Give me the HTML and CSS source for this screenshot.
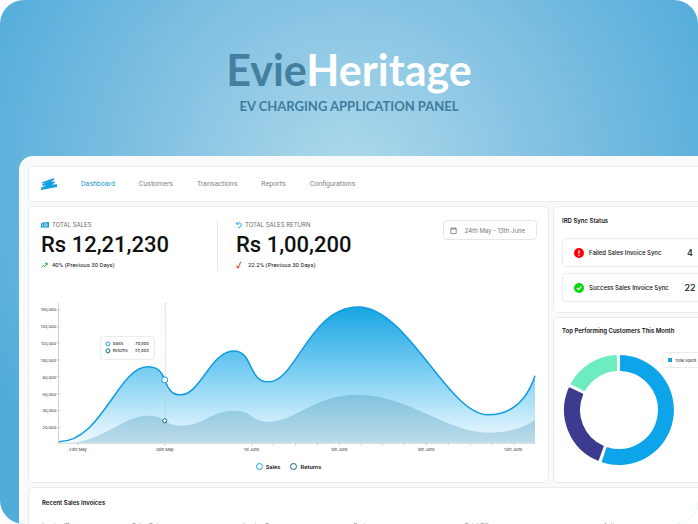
FILE: index.html
```html
<!DOCTYPE html>
<html lang="en">
<head>
    <meta charset="UTF-8">
    <meta name="viewport" content="width=device-width, initial-scale=1.0">
    <title>EvieHeritage</title>
    <link rel="stylesheet" href="styles.css">
</head>
<body>
    <div class="stage">
        <header class="hero">
            <h1><span>Evie</span>Heritage</h1>
            <p>EV CHARGING APPLICATION PANEL</p>
        </header>

        <div class="panel">
            <nav class="navbar card">
                <svg class="logo" viewBox="0 0 16 12" role="img" aria-label="Evie">
                    <path d="M1 4.200 12.500.2 13.500 1.500 10 3.800 14.200 3.400 13.600 5 10.800 6.500 16 6.300V9L0 12V9.800L5 7.600 1 7.800 1.400 6.200 5 4.400 1 5.400z" fill="#12a0e2"/>
                </svg>
                <ul class="menu">
                    <li><a href="#" class="active">Dashboard</a></li>
                    <li><a href="#">Customers</a></li>
                    <li><a href="#">Transactions</a></li>
                    <li><a href="#">Reports</a></li>
                    <li><a href="#">Configurations</a></li>
                </ul>
            </nav>

            <main class="layout">
                <section class="card sales">
                    <div class="stats">
                        <div class="stat">
                            <h2>
                                <svg viewBox="0 0 8 6" width="8" height="6"><path d="M0 1h1v5H0zM1.500 .5 8 0v5.500H1.500z" fill="#1599dc"/><circle cx="4.800" cy="2.900" r="1.300" fill="none" stroke="#fff" stroke-width=".8"/></svg>
                                TOTAL SALES
                            </h2>
                            <p class="value">Rs 12,21,230</p>
                            <p class="trend">
                                <svg viewBox="0 0 7 6" width="7" height="6"><path d="M.5 5 2.500 3.600l1.200.9L6 1.500M4 1.200h2.200v2" fill="none" stroke="#16a637"/></svg>
                                40% (Previous 30 Days)
                            </p>
                        </div>
                        <div class="stat stat-return">
                            <h2>
                                <svg viewBox="0 0 6 6" width="6" height="6"><path d="M1.200 1.500A2.300 2.300 0 1 1 2 5.200M.6.300v1.900h1.900" fill="none" stroke="#1599dc" stroke-width=".9"/></svg>
                                TOTAL SALES RETURN
                            </h2>
                            <p class="value">Rs 1,00,200</p>
                            <p class="trend trend-down">
                                <svg viewBox="0 0 6 8" width="6" height="8"><path d="M5 .8 3.500 3.200l.6 1L1.500 6.500M1 4.500v2.200h2.200" fill="none" stroke="#d8371f"/></svg>
                                22.2% (Previous 30 Days)
                            </p>
                        </div>
                        <button class="date-range" type="button">
                            <svg viewBox="0 0 7 7" width="7" height="7"><path d="M.8 1.300h5.400v5.200H.8zM.8 2h5.400M2 .2v1.300M5 .2v1.300" fill="none" stroke="#777" stroke-width=".8"/></svg>
                            24th May - 13th June
                        </button>
                    </div>

                    <svg class="chart" viewBox="0 0 498 155">
                        <defs>
                            <linearGradient id="salesFill" x1="0" y1="0" x2="0" y2="1">
                                <stop offset="0" stop-color="#17a5e2"/>
                                <stop offset=".5" stop-color="#80d0f3"/>
                                <stop offset="1" stop-color="#f0faff"/>
                            </linearGradient>
                            <linearGradient id="returnsFill" x1="0" y1="0" x2="0" y2="1">
                                <stop offset="0" stop-color="#82c3df"/>
                                <stop offset="1" stop-color="#bbdbe9"/>
                            </linearGradient>
                        </defs>

                        <!-- axes -->
                        <path class="axis" d="M18.500 3v140.500H496M16 10h4M16 27h4M16 43h4M16 60h4M16 77h4M16 94h4M16 111h4M16 128h4"/>
                        <path class="axis" d="M38 143v3M125 143v3M212 143v3M234 143v3M256 143v3M278 143v3M300 143v3M322 143v3M343 143v3M365 143v3M387 143v3M409 143v3M431 143v3M453 143v3M475 143v3"/>

                        <!-- sales -->
                        <path fill="url(#salesFill)" d="M19 142C62 142 78 67 108 67C118 67 122 72 125 80C129 92 134 95 141 95C161 95 171 51 194 51C214 51 208 82 229 82C257 82 270 7 319 7C368 7 409 115 449 115C474 115 488 100 496 76V143H19Z"/>
                        <path class="sales-line" d="M19 142C62 142 78 67 108 67C118 67 122 72 125 80C129 92 134 95 141 95C161 95 171 51 194 51C214 51 208 82 229 82C257 82 270 7 319 7C368 7 409 115 449 115C474 115 488 100 496 76"/>

                        <!-- returns -->
                        <path fill="url(#returnsFill)" d="M30 143C62 142 84 116 108 116C127 116 124 126 141 126C164 126 171 111 194 111C214 111 211 122 229 122C256 122 274 95 319 95C368 95 409 133 449 133C474 133 488 126 496 120V143Z"/>

                        <path class="marker-line" d="M125.500 3v140"/>
                        <circle class="dot" cx="125" cy="80" r="3"/>
                        <circle class="dot dot-dark" cx="125" cy="121" r="2"/>

                        <g class="ticks" text-anchor="end">
                            <text x="16" y="11">160,000</text>
                            <text x="16" y="28">140,000</text>
                            <text x="16" y="45">120,000</text>
                            <text x="16" y="62">100,000</text>
                            <text x="16" y="79">80,000</text>
                            <text x="16" y="96">60,000</text>
                            <text x="16" y="112">40,000</text>
                            <text x="16" y="129">20,000</text>
                        </g>
                        <g class="ticks" text-anchor="middle">
                            <text x="38" y="151">24th May</text>
                            <text x="125" y="151">28th May</text>
                            <text x="212" y="151">1st June</text>
                            <text x="300" y="151">5th June</text>
                            <text x="387" y="151">9th June</text>
                            <text x="474" y="151">13th June</text>
                        </g>

                        <!-- tooltip -->
                        <rect class="tip" x="60.500" y="36.500" width="54" height="23" rx="3"/>
                        <circle class="dot" cx="68" cy="44" r="2"/>
                        <circle class="dot dot-dark" cx="68" cy="51" r="2"/>
                        <g class="ticks tip-text">
                            <text x="73" y="45">Sales</text>
                            <text x="73" y="52">Returns</text>
                            <text x="109" y="45" text-anchor="end">70,000</text>
                            <text x="109" y="52" text-anchor="end">22,000</text>
                        </g>
                    </svg>

                    <ul class="legend">
                        <li>Sales</li>
                        <li class="returns">Returns</li>
                    </ul>
                </section>

                <div class="side">
                    <section class="card sync">
                        <h3>IRD Sync Status</h3>
                        <div class="sync-row">
                            <svg viewBox="0 0 10 10" width="10" height="10"><circle cx="5" cy="5" r="5" fill="#fb0007"/><path d="M5 2.200v3.500M5 6.800v1.200" stroke="#fff" stroke-width="1.200"/></svg>
                            <span class="sync-label">Failed Sales Invoice Sync</span>
                            <span class="count">4</span>
                        </div>
                        <div class="sync-row">
                            <svg viewBox="0 0 10 10" width="10" height="10"><circle cx="5" cy="5" r="5" fill="#0bd60f"/><path d="M3 5.200 4.500 6.600 7.200 3.600" fill="none" stroke="#fff" stroke-width="1.200"/></svg>
                            <span class="sync-label">Success Sales Invoice Sync</span>
                            <span class="count">22</span>
                        </div>
                    </section>

                    <section class="card customers">
                        <h3>Top Performing Customers This Month</h3>
                        <div class="donut-wrap">
                            <svg class="donut" viewBox="-56 -56 112 112" width="112" height="112" stroke-width="2" stroke-linejoin="round">
                                <path fill="#0ea4e9" stroke="#0ea4e9" d="M1.900-54A54 54 0 1 1-16.200 51.500L-11.800 38.200A40 40 0 1 0 1.900-40Z"/>
                                <path fill="#3d3b8e" stroke="#3d3b8e" d="M-21.100 49.700A54 54 0 0 1-49.500-21.500L-36.800-15.600A40 40 0 0 0-16.300 36.500Z"/>
                                <path fill="#6decc0" stroke="#6decc0" d="M-47.100-26.400A54 54 0 0 1-3.100-53.900L-2.800-39.900A40 40 0 0 0-34.600-20Z"/>
                            </svg>
                            <div class="donut-tip">Total Spent</div>
                        </div>
                    </section>
                </div>
            </main>

            <section class="card invoices">
                <h3>Recent Sales Invoices</h3>
                <table>
                    <thead>
                        <tr>
                            <th class="col-id">Invoice ID</th>
                            <th class="col-wide">Sales Date</th>
                            <th class="col-wide">Invoice Type</th>
                            <th class="col-wide">Party</th>
                            <th class="col-bill">Total Bill</th>
                            <th>Action</th>
                        </tr>
                    </thead>
                </table>
            </section>
        </div>
    </div>
</body>
</html>
```

FILE: styles.css
```css
* {
    margin: 0;
    padding: 0;
    box-sizing: border-box;
}

body {
    background-color: #fff;
    color: #111;
    font-family: Inter, "Liberation Sans", sans-serif;
    font-size: 6px;
}

.stage {
    height: 100vh;
    overflow: hidden;
    border-radius: 24px;
    background: radial-gradient(circle 400px at 50% 180px, #afdaeb 0%, #82c1e2 50%, #52acda 100%);
}

/* Hero */
.hero {
    height: 156px;
    padding-top: 44px;
    text-align: center;
    font-family: Lato, sans-serif;
    font-weight: bold;
    color: #3f7c9c;
}

.hero h1 {
    font-size: 43px;
    line-height: 52px;
    color: #fff;
}

.hero h1 span {
    color: #437f9f;
}

.hero p {
    font-size: 13px;
    line-height: 20px;
}

/* Panel runs off the right and bottom edges */
.panel {
    margin-left: 19px;
    margin-right: -60px;
    padding: 10px 9px;
    border-radius: 14px 0 0 0;
    background-color: #f8fafc;
    display: flex;
    flex-direction: column;
    gap: 4px;
}

.card {
    background-color: #fff;
    border: 1px solid #e9ebed;
    border-radius: 5px;
}

.navbar {
    height: 36px;
    padding: 0 12px;
    display: flex;
    align-items: center;
    gap: 24px;
}

.logo {
    width: 16px;
    height: 12px;
}

.menu {
    display: flex;
    gap: 24px;
    list-style: none;
}

.menu a {
    color: #848484;
    font-family: Roboto, sans-serif;
    font-size: 7px;
    text-decoration: none;
}

.menu .active {
    color: #1599d6;
}

.layout {
    display: grid;
    grid-template-columns: minmax(0, 1fr) 196px;
    gap: 4px;
}

/* Sales */
.sales {
    padding: 13px 11px 11px;
}

.stats {
    display: flex;
    align-items: flex-start;
    height: 80px;
    padding-left: 1px;
}

.stat {
    width: 177px;
    height: 50px;
    border-right: 1px solid #e8e8e8;
}

.stat-return {
    width: auto;
    margin-right: auto;
    padding-left: 18px;
    border-right: none;
}

.stat h2 {
    display: flex;
    align-items: center;
    gap: 3px;
    height: 9px;
    color: #6b6b6b;
    font-size: 6px;
    font-weight: normal;
}

.value {
    font-family: Roboto, sans-serif;
    font-size: 22px;
    font-weight: 500;
    line-height: 31px;
}

.trend {
    display: flex;
    align-items: center;
    gap: 4px;
    height: 9px;
    font-family: Roboto, sans-serif;
}

.trend-down {
    gap: 6px;
}

.date-range {
    display: flex;
    align-items: center;
    gap: 8px;
    height: 20px;
    padding: 0 11px 0 6px;
    border: 1px solid #e6e6e6;
    border-radius: 4px;
    background-color: #fff;
    color: #777;
    font-family: inherit;
    font-size: 6px;
}

.chart {
    display: block;
    width: 100%;
}

.axis {
    fill: none;
    stroke: #cfcfcf;
}

.sales-line {
    fill: none;
    stroke: #109be0;
    stroke-width: 1.5;
}

.marker-line {
    stroke: #c4c4c4;
    stroke-dasharray: 1 1;
}

.dot {
    fill: #fff;
    stroke: #1b9fe0;
}

.dot-dark {
    stroke: #11618f;
}

.ticks {
    fill: #333;
    font-size: 4px;
}

.tip {
    fill: #fff;
    stroke: #e8eaec;
}

.tip-text {
    font-weight: 500;
}

.legend {
    display: flex;
    justify-content: center;
    gap: 10px;
    padding-top: 8px;
    list-style: none;
    font-family: Roboto, sans-serif;
    font-weight: 500;
    line-height: 8px;
}

.legend li {
    display: flex;
    align-items: center;
    gap: 3px;
}

.legend li::before {
    content: "";
    width: 5px;
    height: 5px;
    border: 1px solid #1b9fe0;
    border-radius: 50%;
}

.legend .returns::before {
    border-color: #11618f;
}

/* Side column */
.side {
    display: flex;
    flex-direction: column;
    gap: 4px;
}

h3 {
    font-size: 6px;
    font-weight: 600;
    line-height: 10px;
}

.sync {
    padding: 9px 8px 10px;
    display: flex;
    flex-direction: column;
    gap: 6px;
}

.sync h3 {
    margin-bottom: 6px;
}

.sync-row {
    height: 29px;
    padding: 0 11px;
    display: flex;
    align-items: center;
    gap: 5px;
    border: 1px solid #e9ebed;
    border-radius: 4px;
}

.sync-label {
    width: 88px;
    font-weight: 500;
    white-space: nowrap;
}

.count {
    width: 16px;
    font-size: 9px;
    font-weight: 500;
    text-align: center;
}

.customers {
    flex: 1;
    padding: 8px;
}

.donut-wrap {
    position: relative;
    padding: 18px 1px 0;
}

.donut {
    display: block;
}

.donut-tip {
    position: absolute;
    top: 16px;
    left: 100px;
    height: 16px;
    padding: 0 5px;
    display: flex;
    align-items: center;
    gap: 3px;
    border: 1px solid #e9ebed;
    border-radius: 4px;
    background-color: #fff;
    font-size: 4px;
}

.donut-tip::before {
    content: "";
    width: 4px;
    height: 4px;
    background-color: #0ea4e9;
}

/* Invoices */
.invoices {
    padding: 10px 13px;
}

.invoices table {
    width: 100%;
    margin-top: 14px;
    border-collapse: collapse;
    table-layout: fixed;
}

.invoices th {
    color: #848484;
    font-size: 6px;
    font-weight: normal;
    text-align: left;
}

.invoices .col-id {
    width: 13%;
}

.invoices .col-wide {
    width: 16%;
}

.invoices .col-bill {
    width: 20%;
}
```
